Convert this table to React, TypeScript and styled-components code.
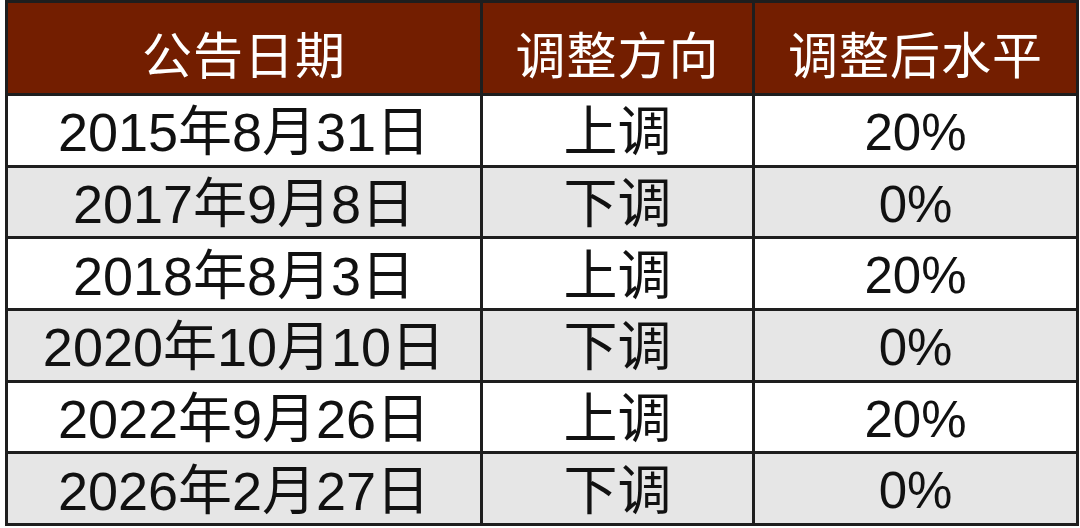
import React from "react";
import styled, {createGlobalStyle} from "styled-components";

const GlobalStyle = createGlobalStyle`
  html, body {
    margin: 0;
    padding: 0;
    background: #ffffff;
  }
`;

const Page = styled.div`
  width: 1080px;
  height: 528px;
  padding: 0 4px 0 5px;
  box-sizing: border-box;
  overflow: hidden;
`;

const Table = styled.table`
  width: 1071px;
  table-layout: fixed;
  border-collapse: collapse;
  font-family: "Liberation Sans", Arial, "Noto Sans CJK SC", sans-serif;
  border: 3px solid #1e1e1e;
`;

const HeadCell = styled.th`
  height: 93px;
  padding: 8px 0 0;
  box-sizing: border-box;
  background: #731e00;
  color: #ffffff;
  font-family: "Noto Sans CJK SC", sans-serif;
  font-weight: 400;
  font-size: 50px;
  letter-spacing: 1px;
  text-align: center;
  vertical-align: middle;
  border: 3px solid #1e1e1e;
  line-height: 1;
`;

const Row = styled.tr<{ $shaded: boolean }>`
  background: ${p => (p.$shaded ? "#e6e6e6" : "#ffffff")};
`;

const Cell = styled.td<{ $size: number }>`
  height: 71.7px;
  padding: 4px 0 0;
  box-sizing: border-box;
  color: #111111;
  font-size: ${p => p.$size}px;
  text-align: center;
  vertical-align: middle;
  border: 3px solid #1e1e1e;
  line-height: 1;
  white-space: nowrap;
`;

const rows = [
    {date: "2015年8月31日", dir: "上调", level: "20%"},
    {date: "2017年9月8日", dir: "下调", level: "0%"},
    {date: "2018年8月3日", dir: "上调", level: "20%"},
    {date: "2020年10月10日", dir: "下调", level: "0%"},
    {date: "2022年9月26日", dir: "上调", level: "20%"},
    {date: "2026年2月27日", dir: "下调", level: "0%"},
];

export default function App() {
    return (
        <Page>
            <GlobalStyle/>
            <Table>
                <colgroup>
                    <col style={{width: 475}}/>
                    <col style={{width: 272}}/>
                    <col style={{width: 324}}/>
                </colgroup>
                <thead>
                <tr>
                    <HeadCell>公告日期</HeadCell>
                    <HeadCell>调整方向</HeadCell>
                    <HeadCell>调整后水平</HeadCell>
                </tr>
                </thead>
                <tbody>
                {rows.map((r, i) => (
                    <Row key={i} $shaded={i % 2 === 1}>
                        <Cell $size={54}>{r.date}</Cell>
                        <Cell $size={54}>{r.dir}</Cell>
                        <Cell $size={51}>{r.level}</Cell>
                    </Row>
                ))}
                </tbody>
            </Table>
        </Page>
    );
}
